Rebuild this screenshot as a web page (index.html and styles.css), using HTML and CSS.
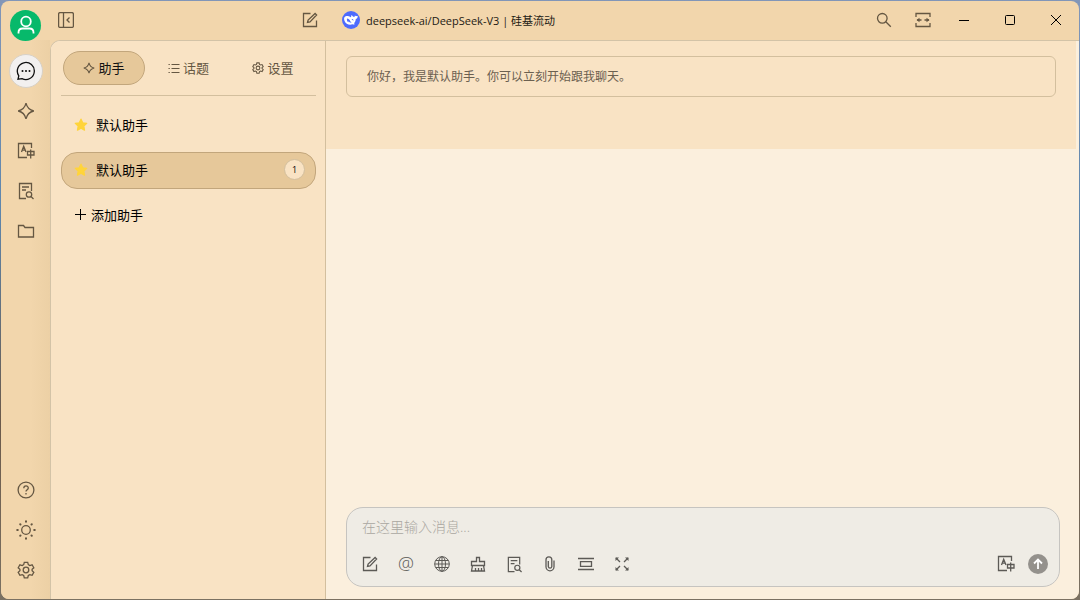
FILE: index.html
```html
<!DOCTYPE html>
<html lang="zh-CN">
<head>
<meta charset="utf-8">
<title>默认助手</title>
<link rel="stylesheet" href="styles.css">
</head>
<body>
<svg class="sprite" aria-hidden="true">
  <symbol id="edit" viewBox="0 0 16 16"><path d="M8.500 1.500H1.500v13h13V8.500M5.500 10.500l.6-2.500 7-6.500 1.500 1.500-6.600 7z"/></symbol>
  <symbol id="sparkle" viewBox="0 0 18 18"><path d="M9 1.200C10 5.600 12.400 8 16.800 9 12.400 10 10 12.400 9 16.800 8 12.400 5.600 10 1.200 9 5.600 8 8 5.600 9 1.200z"/></symbol>
  <symbol id="translate" viewBox="0 0 18 18"><path d="M14.500 6V1.500h-13v14H10M4.500 10l2.200-5.800L9 10M5.300 8.200h2.900M10.500 9.500h6.500v3.500h-6.500zM13.700 7.500v9"/></symbol>
  <symbol id="docsearch" viewBox="0 0 18 18"><path d="M14.500 9V1.500h-12v15H9M5 5h7M5 8h4"/><circle cx="12" cy="12.500" r="2.700"/><path d="M14 14.500l2.500 2.500"/></symbol>
  <symbol id="gear" viewBox="0 0 18 18"><path d="M7.300 1.300h3.400l.6 2.300 1.500.9 2.300-.7 1.700 3-1.700 1.500v1.500l1.700 1.500-1.700 3-2.300-.7-1.500.9-.6 2.300H7.300l-.6-2.300-1.500-.9-2.300.7-1.700-3 1.700-1.500V8.300L1.200 6.800l1.700-3 2.300.7 1.500-.9z"/><circle cx="9" cy="9" r="2.800"/></symbol>
  <symbol id="whale" viewBox="0 0 18 18"><circle cx="9" cy="9" r="9" fill="#4d6bfe" stroke="none"/><path fill="#fff" stroke="none" d="M2.300 6.500C3.600 4.800 6.400 4.600 8.400 6c.8.500 1 .1.700-.6C9 4.400 9.600 4 10.100 4.600c.5.900 1.200 1.400 2 1.400.5 0 .8-.6.800-1.700.4.800 1.100 1 1.700.8.500-.1 1.100-.2 1.100.3-.1 1.300-.9 2.200-1.900 2.500-.1 1.900-.8 3.400-1.900 4.400.3.400.8.600 1.200.8-.8.600-1.800.5-2.600.1-3.200 1.300-6.700-.3-7.800-3-.6-1.300-.8-2.700-.4-3.700z"/><path fill="#4d6bfe" stroke="none" d="M5 7.500c1.500 0 2.600.9 3.200 2.400.4.900.8 1.400 1.500 1.800-1.700.2-2.500-.8-3.500-1.200-.2.600.4.900.7 1.200C5.400 11.200 4.500 9.300 5 7.500zM9.500 8.100c1-.3 1.900.3 2.100 1.300-.9.100-1.500-.4-2.100-1.300z"/></symbol>
</svg>
<div class="window">
  <header class="titlebar">
    <div class="brand"><button class="avatar" aria-label="用户"><svg class="i26" viewBox="0 0 26 26"><circle cx="13" cy="8.500" r="4.800"/><path d="M5.500 20.500v-1c0-3 1.500-4 4-4h7c2.500 0 4 1 4 4v1"/></svg></button></div>
    <div class="titlepanel">
      <button aria-label="收起侧栏"><svg class="i16" viewBox="0 0 16 16"><rect x=".6" y=".6" width="14.800" height="14.800" rx="1.500"/><path d="M5.500 1v14M11.500 5.500L9 8l2.500 2.500"/></svg></button>
      <button aria-label="新建话题"><svg class="i16"><use href="#edit"/></svg></button>
    </div>
    <div class="titlemain">
      <button class="model"><svg class="i18"><use href="#whale"/></svg><span>deepseek-ai/DeepSeek-V3 | 硅基流动</span></button>
      <div class="actions">
        <button aria-label="搜索"><svg class="i16" viewBox="0 0 16 16"><circle cx="6.300" cy="6.300" r="4.800"/><path d="M9.800 9.800l5 5"/></svg></button>
        <button aria-label="宽屏"><svg class="i16" viewBox="0 0 16 16"><path d="M1 5V1.500h14V5M1 11v3.500h14V11M2 8h4.500M9.500 8H14"/><path class="fill" d="M1.500 8l3-2.200v4.400zM14.500 8l-3-2.200v4.400z"/></svg></button>
      </div>
      <div class="controls">
        <button aria-label="最小化"><svg class="i12" viewBox="0 0 12 12"><path d="M1 6.500h10"/></svg></button>
        <button aria-label="最大化"><svg class="i12" viewBox="0 0 12 12"><rect x="1.500" y="1.500" width="9" height="9" rx="1"/></svg></button>
        <button aria-label="关闭"><svg class="i12" viewBox="0 0 12 12"><path d="M1 1l10 10M11 1L1 11"/></svg></button>
      </div>
    </div>
  </header>
  <div class="body">
    <nav class="rail">
      <button class="active" aria-label="聊天"><svg class="i20" viewBox="0 0 20 20"><path d="M2 18.200l.8-3.400A8.500 8.500 0 1 1 6 17.600L2 18.200z"/><path class="dots" d="M6.500 10h.01M10 10h.01M13.500 10h.01"/></svg></button>
      <button aria-label="助手库"><svg class="i18"><use href="#sparkle"/></svg></button>
      <button aria-label="翻译"><svg class="i18"><use href="#translate"/></svg></button>
      <button aria-label="知识库"><svg class="i18"><use href="#docsearch"/></svg></button>
      <button aria-label="文件"><svg class="i18" viewBox="0 0 18 18"><path d="M1.500 15V3.500h5L8 5.500h8.500V15z"/></svg></button>
      <span class="spacer"></span>
      <button aria-label="帮助"><svg class="i18" viewBox="0 0 18 18"><circle cx="9" cy="9" r="7.900"/><path d="M6.800 7.200c0-3 4.500-2.900 4.500-.2 0 1.700-2.300 1.700-2.300 3.500M9 12v1.500"/></svg></button>
      <button aria-label="主题"><svg class="i20" viewBox="0 0 20 20"><circle cx="10" cy="10" r="4.300"/><path class="dots" d="M10 1.200v.6M10 18.200v.6M1.200 10h.6M18.200 10h.6M4.200 4.200l.3.300M15.500 15.500l.3.300M4.200 15.800l.3-.3M15.500 4.500l.3-.3"/></svg></button>
      <button aria-label="设置"><svg class="i18"><use href="#gear"/></svg></button>
    </nav>
    <div class="content">
      <aside class="panel">
        <div class="tabs">
          <button class="on"><svg class="i12"><use href="#sparkle"/></svg>助手</button>
          <button><svg class="i12" viewBox="0 0 12 12"><path d="M3.500 2.500h8M3.500 6.500h8M3.500 10.500h8M.5 2.500h1.300M.5 6.500h1.300M.5 10.500h1.300"/></svg>话题</button>
          <button><svg class="i12 small"><use href="#gear"/></svg>设置</button>
        </div>
        <div class="list">
          <button class="item"><svg class="star" viewBox="0 0 14 14"><path d="M7 1.200l1.700 3.600 4 .5-2.900 2.800.7 4L7 10.200l-3.500 1.900.7-4-2.900-2.800 4-.5z"/></svg>默认助手</button>
          <button class="item selected"><svg class="star" viewBox="0 0 14 14"><path d="M7 1.200l1.700 3.600 4 .5-2.900 2.800.7 4L7 10.200l-3.500 1.900.7-4-2.900-2.800 4-.5z"/></svg>默认助手<span class="count">1</span></button>
          <button class="item add"><svg class="i12" viewBox="0 0 12 12"><path d="M5.500 0v11M0 5.500h11"/></svg>添加助手</button>
        </div>
      </aside>
      <main class="chat">
        <section class="messages"><p class="greeting">你好，我是默认助手。你可以立刻开始跟我聊天。</p></section>
        <form class="composer">
          <textarea rows="1" aria-label="消息" placeholder="在这里输入消息..."></textarea>
          <div class="tools">
            <button type="button" aria-label="新话题"><svg class="i16"><use href="#edit"/></svg></button>
            <button type="button" class="at" aria-label="提及模型">@</button>
            <button type="button" aria-label="联网搜索"><svg class="i16 thin" viewBox="0 0 16 16"><circle cx="8" cy="8" r="7.300"/><ellipse cx="8" cy="8" rx="3.500" ry="7.300"/><path d="M8 .7v14.600M.7 8h14.600M1.800 4.500h12.400M1.800 11.500h12.400"/></svg></button>
            <button type="button" aria-label="清空"><svg class="i16" viewBox="0 0 16 16"><path d="M6.500 5.500v-4h3v4h5v4h-13v-4zM2.500 9.500l-1 5.500h13l-1-5.500M5.500 15v-3M8.500 15v-3M11.500 15v-3"/></svg></button>
            <button type="button" aria-label="知识库"><svg class="i17"><use href="#docsearch"/></svg></button>
            <button type="button" aria-label="附件"><svg class="i16" viewBox="0 0 16 16"><path d="M12 4.500v6.300a4 4 0 0 1-8 0V3.700a2.900 2.900 0 0 1 5.800 0v7a1.800 1.800 0 0 1-3.500 0V5"/></svg></button>
            <button type="button" aria-label="清除上下文"><svg class="i16" viewBox="0 0 16 16"><path d="M0 2.500h16M0 13.500h16M2.500 5.700h11v4.600h-11z"/></svg></button>
            <button type="button" aria-label="展开"><svg class="i16" viewBox="0 0 16 16"><path d="M2 2l4 4M14 2l-4 4M2 14l4-4M14 14l-4-4"/><path class="fill" d="M1.500 1.500h3.500L1.500 5zM14.500 1.500V5L11 1.500zM1.500 14.500V11L5 14.500zM14.500 14.500H11l3.500-3.500z"/></svg></button>
            <span class="spacer"></span>
            <button type="button" class="narrow" aria-label="翻译"><svg class="i18"><use href="#translate"/></svg></button>
            <button type="button" class="narrow" aria-label="发送"><svg class="i20 send" viewBox="0 0 20 20"><circle cx="10" cy="10" r="10"/><path d="M10 15V6M6 9.500l4-4 4 4"/></svg></button>
          </div>
        </form>
      </main>
    </div>
  </div>
</div>
</body>
</html>
```
FILE: styles.css
```css
* { box-sizing: border-box; }
body {
  margin: 0;
  height: 100vh;
  padding: 1px;
  background: linear-gradient(#8296b8, #5d86ad 35%, #6b5a4b 70%, #7b7162);
  font-family: "Open Sans", "Noto Sans CJK SC", sans-serif;
  font-size: 13px;
  color: #111;
}
button {
  display: flex;
  align-items: center;
  justify-content: center;
  margin: 0;
  padding: 0;
  border: 0;
  background: none;
  font: inherit;
  color: #655742;
}
svg { fill: none; stroke: currentColor; stroke-width: 1.3; flex: none; }
.sprite { position: absolute; width: 0; height: 0; }
.i12 { width: 12px; height: 12px; }
.i16 { width: 16px; height: 16px; }
.i17 { width: 17px; height: 17px; }
.i18 { width: 18px; height: 18px; }
.i20 { width: 20px; height: 20px; }
.i26 { width: 26px; height: 26px; }
.thin { stroke-width: 1; }
.dots { stroke-width: 2; stroke-linecap: round; }
.fill { fill: currentColor; stroke: none; }
.spacer { flex: 1; }

.window {
  display: flex;
  flex-direction: column;
  height: 100%;
  border-radius: 8px;
  overflow: hidden;
  background: #f2d6ac;
}
.titlebar { display: flex; height: 39px; padding-bottom: 1px; position: relative; z-index: 1; }
.brand { width: 49px; display: flex; justify-content: center; }
.avatar {
  width: 31px;
  height: 31px;
  margin-top: 9px;
  border-radius: 50%;
  background: #07b96b;
  color: #fff;
}
.avatar svg { stroke-width: 1.8; }
.titlepanel {
  width: 276px;
  padding: 0 8px;
  display: flex;
  align-items: center;
  justify-content: space-between;
}
.titlemain { flex: 1; display: flex; align-items: center; padding-left: 16px; }
.model { gap: 6px; font-size: 11px; color: #1d1a14; }
.actions { margin-left: auto; display: flex; gap: 3px; }
.actions button { width: 36px; height: 38px; }
.controls { display: flex; }
.controls button { width: 46px; height: 38px; color: #000; }
.controls svg { stroke-width: 1; }

.body { flex: 1; display: flex; min-height: 0; }
.rail {
  width: 49px;
  padding: 14px 0 9px;
  display: flex;
  flex-direction: column;
  align-items: center;
  background: linear-gradient(90deg, #f2d6ac 60%, #ecd0a5);
}
.rail button { width: 40px; height: 40px; }
.rail .active {
  width: 34px;
  height: 34px;
  margin-bottom: 3px;
  border: 1px solid #d8d1c6;
  border-radius: 50%;
  background: #f2f0ef;
  color: #111;
}
.content {
  flex: 1;
  display: flex;
  min-width: 0;
  border: 1px solid #d3c3a7;
  border-width: 1px 0 0 1px;
  border-top-left-radius: 10px;
  overflow: hidden;
  background: #fbefdd;
}
.panel { width: 275px; padding: 10px 9px 10px 10px; border-right: 1px solid #d3bf9e; background: #f9e3c4; }
.tabs {
  display: flex;
  justify-content: space-between;
  padding: 0 2px 10px;
  border-bottom: 1px solid #d3bf9e;
}
.tabs button { width: 82px; height: 34px; padding-bottom: 1px; gap: 3px; border: 1px solid transparent; border-radius: 17px; }
.tabs .on { border-color: #c2a67c; background: #e6c89a; color: #111; }
.tabs .on svg { color: #655742; }
.tabs svg { stroke-width: 1; }
.tabs .on svg, .tabs .small { stroke-width: 1.6; }
.list { display: flex; flex-direction: column; gap: 8px; padding-top: 11px; }
.item {
  height: 37px;
  padding: 0 10px 2px 12px;
  gap: 8px;
  justify-content: flex-start;
  border: 1px solid transparent;
  border-radius: 16px;
  color: #000;
}
.item.selected { border-color: #c2a67c; background: #e6c89a; }
.item.add { gap: 4px; padding-left: 13px; }
.add svg { stroke-width: 1; }
.star { width: 14px; height: 14px; fill: #ffd43b; stroke: #ffd43b; stroke-linejoin: round; }
.count {
  width: 21px;
  height: 21px;
  margin-left: auto;
  border: 1px solid #d3bf9e;
  border-radius: 50%;
  background: #f9e3c4;
  font-size: 9px;
  line-height: 19px;
  text-align: center;
}
.chat { flex: 1; display: flex; flex-direction: column; min-width: 0; }
.messages { margin-right: 3px; padding: 15px 20px 52px; background: #f9e3c4; }
.greeting {
  margin: 0;
  padding: 10px 20px;
  border: 1px solid #d3bf9e;
  border-radius: 6px;
  font-size: 12px;
  line-height: 19px;
  color: #6b6050;
}
.composer {
  margin: auto 19px 12px 20px;
  padding: 9px 5px 4px;
  border: 1px solid #c6c4c0;
  border-radius: 17px;
  background: #efece5;
}
textarea {
  display: block;
  width: 100%;
  height: 20px;
  margin-bottom: 9px;
  padding: 0 10px;
  border: 0;
  outline: 0;
  resize: none;
  overflow: hidden;
  background: none;
  font: inherit;
  font-size: 14px;
  font-weight: 300;
  line-height: 20px;
}
textarea::placeholder { color: #aaa7a1; }
.tools { display: flex; align-items: center; }
.tools button { width: 36px; height: 36px; color: #5c5a56; }
.tools .narrow { width: 32px; }
.tools .at { padding-bottom: 2px; font-size: 18px; font-weight: 300; }
.send circle { fill: #94918c; stroke: none; }
.send path { stroke: #fff; stroke-width: 1.8; }
```
